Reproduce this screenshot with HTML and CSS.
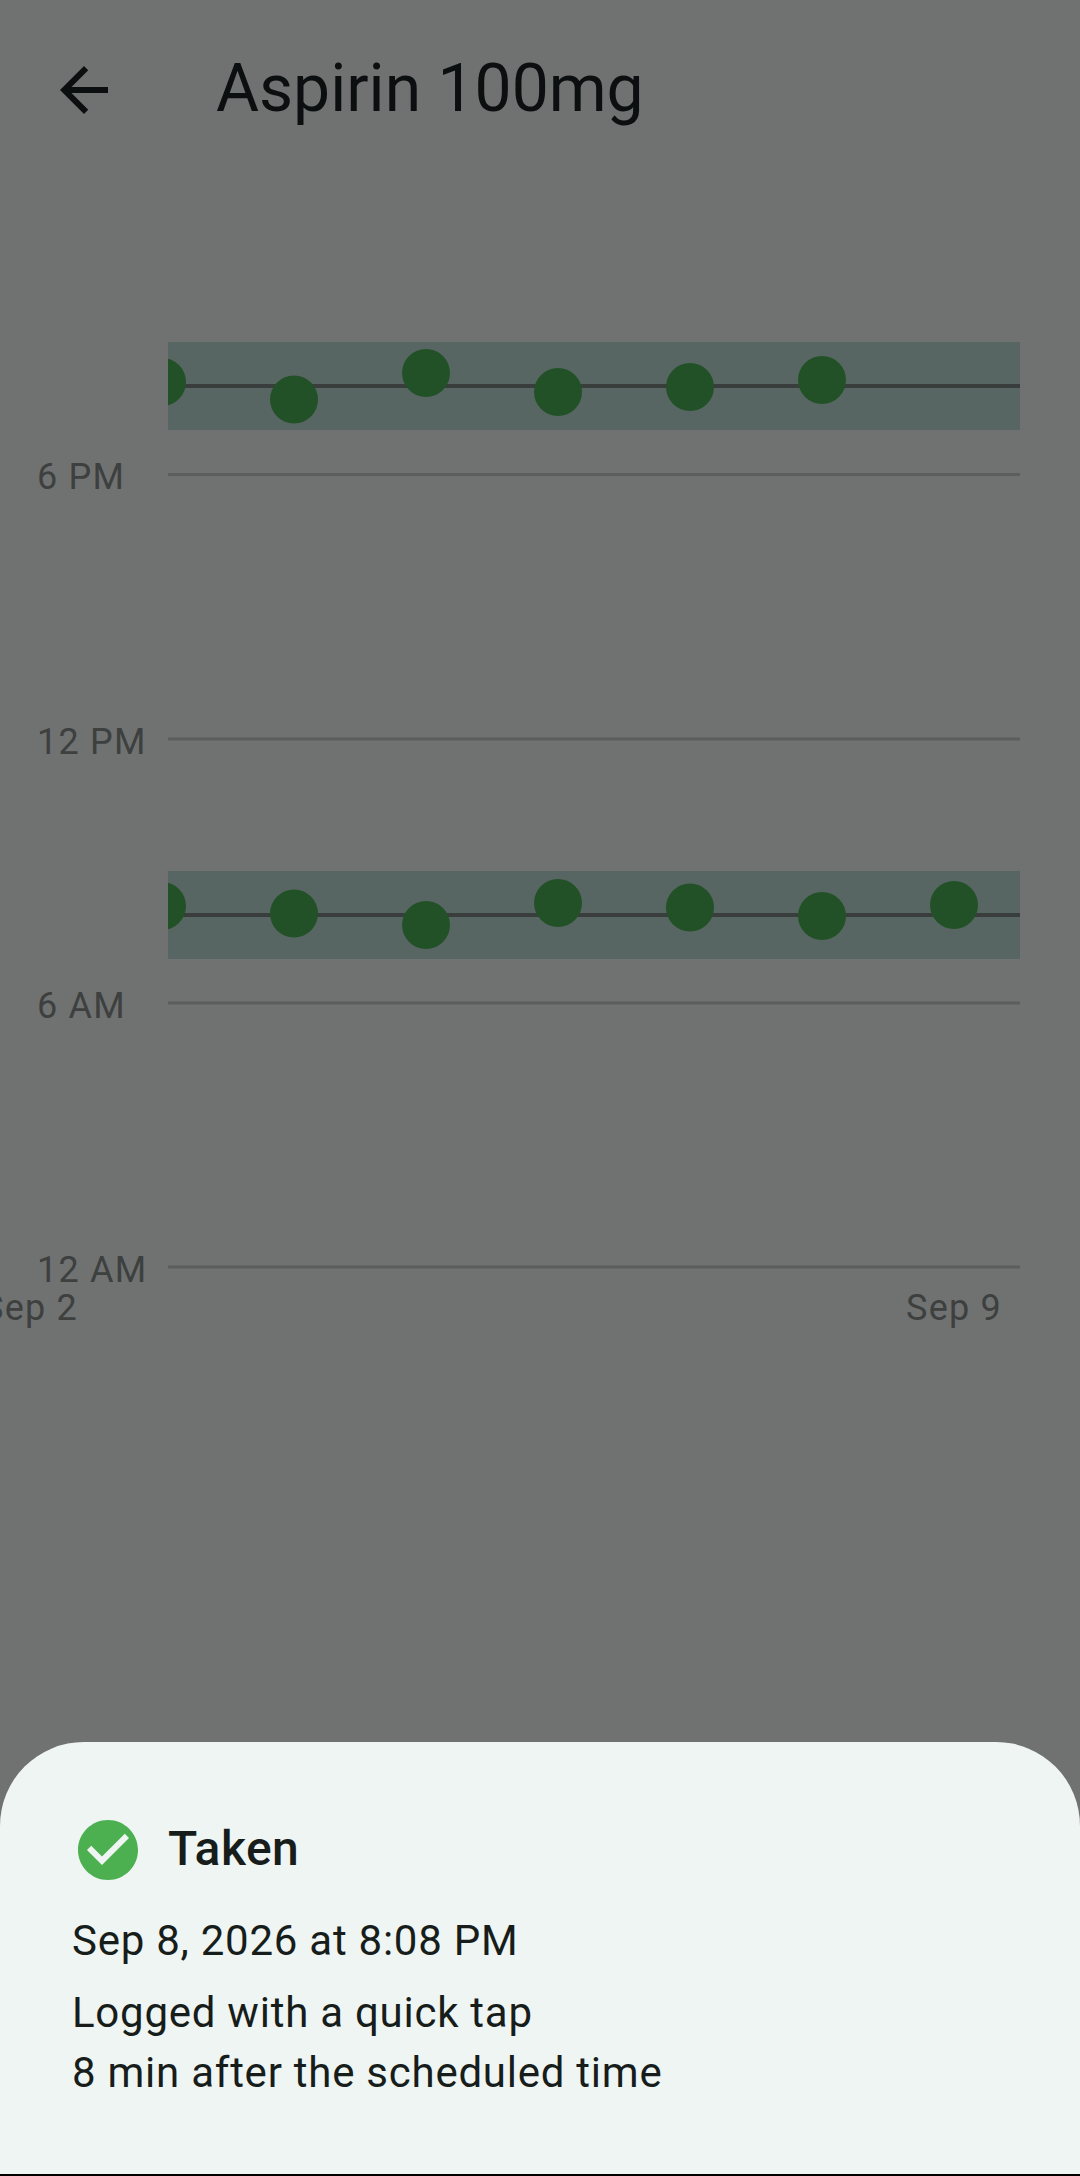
FILE: index.html
```html
<!DOCTYPE html>
<html lang="en">
<head>
<meta charset="utf-8">
<title>Aspirin 100mg</title>
<link rel="stylesheet" href="styles.css">
</head>
<body>
<div class="screen">
  <header class="appbar">
    <svg class="back-icon" viewBox="0 0 24 24" aria-hidden="true"><path d="M20 11H7.83l5.59-5.59L12 4l-8 8 8 8 1.41-1.41L7.83 13H20v-2z"/></svg>
    <h1 class="appbar-title">Aspirin 100mg</h1>
  </header>
  <svg class="chart" viewBox="0 180 1080 1562" preserveAspectRatio="xMinYMin slice">
    <defs><clipPath id="plot"><rect x="168" y="180" width="852" height="1562"/></clipPath></defs>
    <rect class="band" x="168" y="342" width="852" height="88"/>
    <rect class="band" x="168" y="871" width="852" height="88"/>
    <rect class="grid" x="168" y="473" width="852" height="3"/>
    <rect class="grid" x="168" y="737.5" width="852" height="3"/>
    <rect class="grid" x="168" y="1001.5" width="852" height="3"/>
    <rect class="grid" x="168" y="1265.5" width="852" height="3"/>
    <rect class="target" x="168" y="384" width="852" height="4"/>
    <rect class="target" x="168" y="913" width="852" height="4"/>
    <g class="dots" clip-path="url(#plot)">
      <circle cx="162" cy="382" r="24"/><circle cx="294" cy="399.5" r="24"/><circle cx="426" cy="373" r="24"/><circle cx="558" cy="392" r="24"/><circle cx="690" cy="387" r="24"/><circle cx="822" cy="380" r="24"/>
      <circle cx="162" cy="906" r="24"/><circle cx="294" cy="913.5" r="24"/><circle cx="426" cy="925" r="24"/><circle cx="558" cy="903" r="24"/><circle cx="690" cy="907.5" r="24"/><circle cx="822" cy="916" r="24"/><circle cx="954" cy="905" r="24"/>
    </g>
    <text class="axis" x="37" y="489">6 PM</text>
    <text class="axis" x="37" y="754">12 PM</text>
    <text class="axis" x="37" y="1018">6 AM</text>
    <text class="axis" x="37" y="1282">12 AM</text>
    <text class="axis axis-x" x="30" y="1320">Sep 2</text>
    <text class="axis axis-x" x="954" y="1320">Sep 9</text>
  </svg>
  <section class="sheet">
    <div class="status-row">
      <svg class="status-icon" viewBox="0 0 24 24" aria-hidden="true"><path d="M12 2C6.48 2 2 6.48 2 12s4.48 10 10 10 10-4.48 10-10S17.52 2 12 2zm-2 15l-5-5 1.41-1.41L10 14.17l7.59-7.59L19 8l-9 9z"/></svg>
      <h2 class="status-label">Taken</h2>
    </div>
    <p class="when">Sep 8, 2026 at 8:08 PM</p>
    <p class="note">Logged with a quick tap</p>
    <p class="note">8 min after the scheduled time</p>
  </section>
</div>
</body>
</html>
```
FILE: styles.css
```css
* { box-sizing: border-box; }
html, body { margin: 0; padding: 0; background: #000; }
body { font-family: Roboto, "Noto Sans", sans-serif; }
.screen {
  width: 1080px;
  height: 2174px;
  background: #707271;
  display: flex;
  flex-direction: column;
  overflow: hidden;
}
.appbar {
  flex: 0 0 180px;
  display: flex;
  align-items: flex-start;
  padding: 54px 0 0 48px;
  gap: 96px;
}
.back-icon { width: 72px; height: 72px; fill: #0c0f0f; flex: none; }
.appbar-title {
  margin: 0;
  font-size: 66px;
  font-weight: 400;
  line-height: 78px;
  color: #0c0f0f;
  margin-top: -4px;
}
.chart { flex: 1 1 0; width: 1080px; min-height: 0; display: block; }
.band { fill: #586663; }
.grid { fill: #5b5e5d; }
.target { fill: #393e3d; }
.dots circle { fill: #225127; }
.axis { font-family: Roboto, sans-serif; font-size: 36px; fill: #3d403f; letter-spacing: 1.2px; }
.axis-x { text-anchor: middle; }
.sheet {
  flex: 0 0 432px;
  background: #eff5f2;
  border-radius: 84px 84px 0 0;
  padding: 72px 0 0 72px;
  color: #171d1b;
}
.status-row { display: flex; align-items: center; gap: 24px; height: 72px; }
.status-icon { width: 72px; height: 72px; fill: #4caf50; flex: none; }
.status-label { margin: -2px 0 0; font-size: 48px; font-weight: 500; line-height: 72px; letter-spacing: 0.45px; }
.when { margin: 25px 0 12px; font-size: 42px; line-height: 60px; letter-spacing: 0.75px; }
.note { margin: 0; font-size: 42px; line-height: 60px; letter-spacing: 0.75px; }
```
